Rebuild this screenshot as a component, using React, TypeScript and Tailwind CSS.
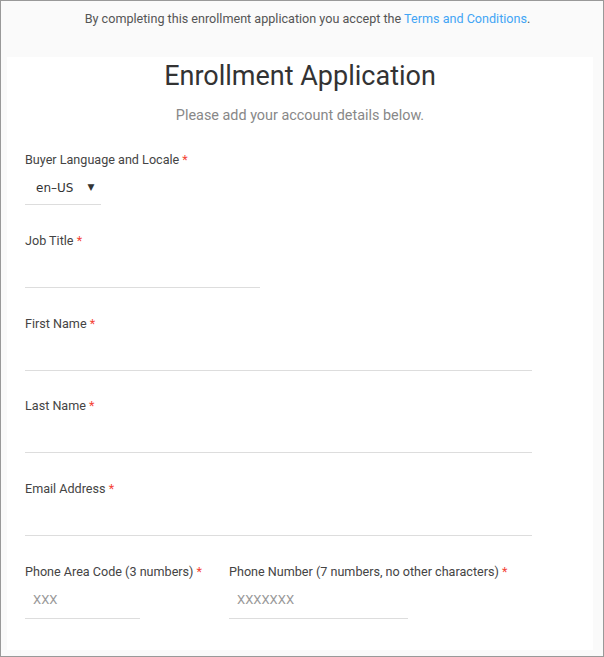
export default function App() {
  const label = "block h-[19px] pt-[1px] text-[12.6px] leading-[18px] text-[#444]";
  const star = <span className="text-[#f44336]"> *</span>;

  return (
    <div className="h-[657px] w-[604px] border border-[#999] bg-[#fafafa] font-['Roboto',sans-serif] flex flex-col">
      <p className="h-[36px] pt-[9px] pl-[11px] text-center text-[12.6px] leading-[18px] text-[#555]">
        By completing this enrollment application you accept the{" "}
        <a className="text-[#42a5f5]" href="#">Terms and Conditions</a>.
      </p>
      <div className="mt-[20px] ml-[6px] mr-[10px] flex-1 mb-[6px] bg-white pt-[1px]">
        <h1 className="text-center text-[27px] leading-[36px] text-[#333]">Enrollment Application</h1>
        <p className="mt-3 text-center text-[14.4px] leading-[20px] text-[#888]">Please add your account details below.</p>

        <div className="pl-[18px]">
          <div className="mt-[24px]">
            <label className={label}>Buyer Language and Locale{star}</label>
            <div className="flex h-[36px] w-[76px] items-center border-b border-[#ddd] pl-[11px] pt-[2px] font-['DejaVu_Sans',sans-serif] text-[12px] text-[#333]">
              <span>en–US</span>
              <span className="ml-[14px] text-[9px]">▼</span>
            </div>
          </div>

          <div className="mt-[26px]">
            <label className={label}>Job Title{star}</label>
            <div className="h-[38px] w-[235px] border-b border-[#ddd]" />
          </div>

          <div className="mt-[26px]">
            <label className={label}>First Name{star}</label>
            <div className="h-[38px] w-[507px] border-b border-[#ddd]" />
          </div>

          <div className="mt-[25px]">
            <label className={label}>Last Name{star}</label>
            <div className="h-[38px] w-[507px] border-b border-[#ddd]" />
          </div>

          <div className="mt-[26px]">
            <label className={label}>Email Address{star}</label>
            <div className="h-[38px] w-[507px] border-b border-[#ddd]" />
          </div>

          <div className="mt-[26px] flex">
            <div className="w-[204px]">
              <label className={label}>Phone Area Code (3 numbers){star}</label>
              <div className="flex h-[38px] w-[115px] items-center border-b border-[#ddd] pl-[8px] text-[13px] text-[#999]">XXX</div>
            </div>
            <div>
              <label className={label}>Phone Number (7 numbers, no other characters){star}</label>
              <div className="flex h-[38px] w-[179px] items-center border-b border-[#ddd] pl-[8px] text-[13px] text-[#999]">XXXXXXX</div>
            </div>
          </div>
        </div>
      </div>
    </div>
  );
}
